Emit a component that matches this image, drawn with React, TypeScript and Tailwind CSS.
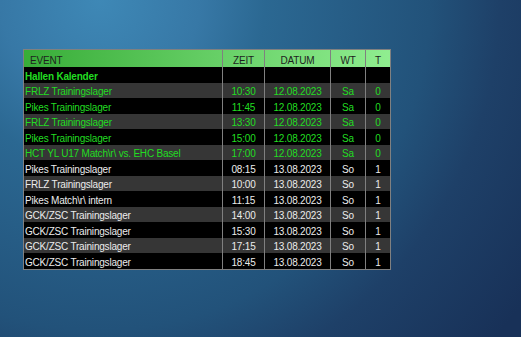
import React from "react";

type Row = { event: string; zeit: string; datum: string; wt: string; t: string; green: boolean };

const rows: Row[] = [
  { event: "FRLZ Trainingslager", zeit: "10:30", datum: "12.08.2023", wt: "Sa", t: "0", green: true },
  { event: "Pikes Trainingslager", zeit: "11:45", datum: "12.08.2023", wt: "Sa", t: "0", green: true },
  { event: "FRLZ Trainingslager", zeit: "13:30", datum: "12.08.2023", wt: "Sa", t: "0", green: true },
  { event: "Pikes Trainingslager", zeit: "15:00", datum: "12.08.2023", wt: "Sa", t: "0", green: true },
  { event: "HCT YL U17 Match\\r\\ vs. EHC Basel", zeit: "17:00", datum: "12.08.2023", wt: "Sa", t: "0", green: true },
  { event: "Pikes Trainingslager", zeit: "08:15", datum: "13.08.2023", wt: "So", t: "1", green: false },
  { event: "FRLZ Trainingslager", zeit: "10:00", datum: "13.08.2023", wt: "So", t: "1", green: false },
  { event: "Pikes Match\\r\\ intern", zeit: "11:15", datum: "13.08.2023", wt: "So", t: "1", green: false },
  { event: "GCK/ZSC Trainingslager", zeit: "14:00", datum: "13.08.2023", wt: "So", t: "1", green: false },
  { event: "GCK/ZSC Trainingslager", zeit: "15:30", datum: "13.08.2023", wt: "So", t: "1", green: false },
  { event: "GCK/ZSC Trainingslager", zeit: "17:15", datum: "13.08.2023", wt: "So", t: "1", green: false },
  { event: "GCK/ZSC Trainingslager", zeit: "18:45", datum: "13.08.2023", wt: "So", t: "1", green: false },
];

export default function App() {
  return (
    <div
      className="w-full h-[337px] overflow-hidden bg-[radial-gradient(circle_at_100px_0px,#3e88b6_0px,#3778a6_100px,#2b6892_165px,#22527a_330px,#1e4068_400px,#183158_520px)] pt-[49px] pl-[23px]"
      style={{ fontFamily: '"Liberation Sans", Arial, sans-serif' }}
    >
      <div className="w-[368px] border border-[#808080] text-[10px] tracking-[-0.2px]">
        <div className="flex h-[17px] items-center bg-[linear-gradient(to_right,#38ad38,#90ee90)] text-[#1e1e1e]">
          <div className="w-[198px] h-full flex items-center pl-[6px] pt-[3px]">EVENT</div>
          <div className="w-[42px] h-full flex items-center justify-center border-l border-[#808080] pt-[3px]">ZEIT</div>
          <div className="w-[66px] h-full flex items-center justify-center border-l border-[#808080] pt-[3px]">DATUM</div>
          <div className="w-[35px] h-full flex items-center justify-center border-l border-[#808080] pt-[3px]">WT</div>
          <div className="w-[25px] h-full flex items-center justify-center border-l border-[#808080] pt-[3px]">T</div>
        </div>
        <div className="flex h-[15.5px] bg-black text-[#22dd22] font-bold">
          <div className="w-[198px] h-full flex items-center pl-px pt-[3px]">Hallen Kalender</div>
          <div className="w-[42px] h-full border-l border-[#808080]" />
          <div className="w-[66px] h-full border-l border-[#808080]" />
          <div className="w-[35px] h-full border-l border-[#808080]" />
          <div className="w-[25px] h-full border-l border-[#808080]" />
        </div>
        {rows.map((r, i) => (
          <div
            key={i}
            className={
              "flex h-[15.5px] " +
              (i % 2 === 0 ? "bg-[#363636] " : "bg-black ") +
              (r.green ? "text-[#22dd22]" : "text-[#ececec]")
            }
          >
            <div className="w-[198px] h-full flex items-center pl-px pt-[3px] whitespace-nowrap">{r.event}</div>
            <div className="w-[42px] h-full flex items-center justify-center border-l border-[#808080] pt-[3px]">{r.zeit}</div>
            <div className="w-[66px] h-full flex items-center justify-center border-l border-[#808080] pt-[3px]">{r.datum}</div>
            <div className="w-[35px] h-full flex items-center justify-center border-l border-[#808080] pt-[3px]">{r.wt}</div>
            <div className="w-[25px] h-full flex items-center justify-center border-l border-[#808080] pt-[3px]">{r.t}</div>
          </div>
        ))}
      </div>
    </div>
  );
}
